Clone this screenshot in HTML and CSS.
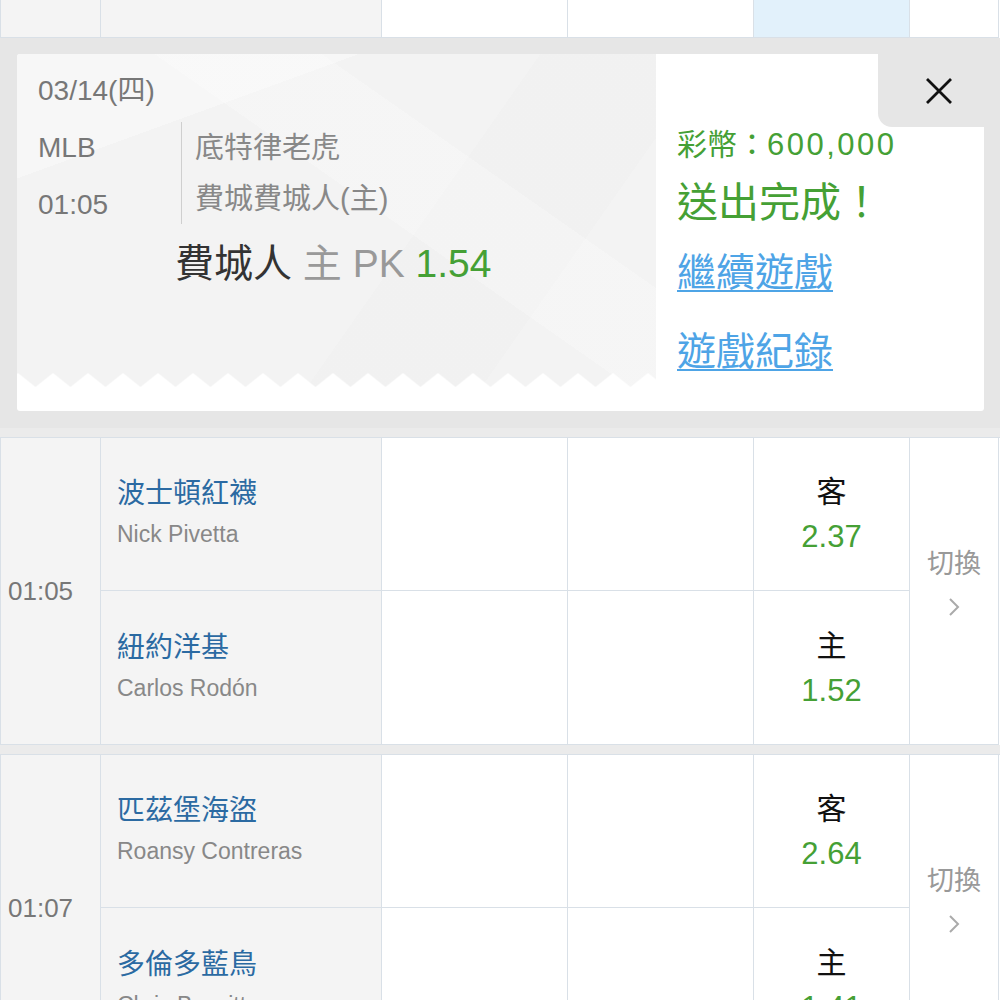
FILE: index.html
```html
<!DOCTYPE html>
<html lang="zh-Hant">
<head>
  <meta charset="UTF-8" />
  <meta name="viewport" content="width=device-width, initial-scale=1.0" />
  <title>投注完成</title>
  <link rel="stylesheet" href="styles.css">
</head>
<body>
  <div class="page">
    <div class="row-tail">
      <div class="cell side-col"></div>
      <div class="cell side-col"></div>
      <div class="cell"></div>
      <div class="cell"></div>
      <div class="cell picked"></div>
      <div class="cell"></div>
    </div>

    <div class="confirm">
      <div class="card">
        <div class="ticket">
          <div class="date">03/14(四)</div>
          <div class="info">
            <div class="meta">
              <div class="league">MLB</div>
              <div class="kick">01:05</div>
            </div>
            <div class="teams">
              <div class="away">底特律老虎</div>
              <div class="home">費城費城人(主)</div>
            </div>
          </div>
          <div class="pick">
            <span class="pick-team">費城人</span>
            <span class="pick-type">主 PK</span>
            <span class="pick-odds">1.54</span>
          </div>
          <svg class="teeth" width="639" height="14">
            <defs>
              <pattern id="tooth" x="-16.5" y="0" width="35" height="14" patternUnits="userSpaceOnUse">
                <polygon points="0,14 17.5,0 35,14" fill="#fff" />
              </pattern>
            </defs>
            <rect width="639" height="14" fill="url(#tooth)" />
          </svg>
        </div>
        <div class="result">
          <div class="coins">彩幣：<span class="amount">600,000</span></div>
          <div class="done">送出完成！</div>
          <a class="link" href="#">繼續遊戲</a>
          <a class="link second" href="#">遊戲紀錄</a>
        </div>
      </div>
      <button class="close" aria-label="關閉">
        <svg width="28" height="28" viewBox="0 0 28 28">
          <path d="M2 2 L26 26 M26 2 L2 26" stroke="#111" stroke-width="2.8" fill="none" />
        </svg>
      </button>
    </div>

    <div class="band"></div>
    <div class="match">
      <div class="cell time">01:05</div>
      <div class="cell team">
        <div class="name">波士頓紅襪</div>
        <div class="pitcher">Nick Pivetta</div>
      </div>
      <div class="cell"></div>
      <div class="cell"></div>
      <div class="cell odds">
        <div class="side">客</div>
        <div class="price">2.37</div>
      </div>
      <div class="cell switch">
        <span>切換</span>
        <svg width="12" height="18" viewBox="0 0 12 18"><polyline points="2,1 10,9 2,17" fill="none" stroke="#aaa" stroke-width="2" /></svg>
      </div>
      <div class="cell team">
        <div class="name">紐約洋基</div>
        <div class="pitcher">Carlos Rodón</div>
      </div>
      <div class="cell"></div>
      <div class="cell"></div>
      <div class="cell odds">
        <div class="side">主</div>
        <div class="price">1.52</div>
      </div>
    </div>

    <div class="band"></div>
    <div class="match">
      <div class="cell time">01:07</div>
      <div class="cell team">
        <div class="name">匹茲堡海盜</div>
        <div class="pitcher">Roansy Contreras</div>
      </div>
      <div class="cell"></div>
      <div class="cell"></div>
      <div class="cell odds">
        <div class="side">客</div>
        <div class="price">2.64</div>
      </div>
      <div class="cell switch">
        <span>切換</span>
        <svg width="12" height="18" viewBox="0 0 12 18"><polyline points="2,1 10,9 2,17" fill="none" stroke="#aaa" stroke-width="2" /></svg>
      </div>
      <div class="cell team">
        <div class="name">多倫多藍鳥</div>
        <div class="pitcher">Chris Bassitt</div>
      </div>
      <div class="cell"></div>
      <div class="cell"></div>
      <div class="cell odds">
        <div class="side">主</div>
        <div class="price">1.41</div>
      </div>
    </div>
  </div>
</body>
</html>
```

FILE: styles.css
```css
* {
  box-sizing: border-box;
}

body {
  margin: 0;
  background: #fff;
  font-family: "Liberation Sans", "Noto Sans CJK TC", sans-serif;
  color: #333;
}

.page {
  width: 1000px;
  height: 1000px;
  overflow: hidden;
}

/* ---------- table ---------- */

.row-tail,
.match {
  display: grid;
  grid-template-columns: 100px 281px 186px 186px 156px 89px;
  border-left: 1px solid #d9e0e7;
}

.row-tail {
  grid-template-rows: 38px;
}

.match {
  grid-template-rows: 153px 154px;
  border-top: 1px solid #d9e0e7;
}

.cell {
  border-right: 1px solid #d9e0e7;
  border-bottom: 1px solid #d9e0e7;
  background: #fff;
}

.side-col,
.time,
.team {
  background: #f4f4f4;
}

.picked {
  background: #e2f1fb;
}

.band {
  height: 9px;
  background: #ebebeb;
}

.time {
  grid-row: span 2;
  display: flex;
  align-items: center;
  padding-left: 7px;
  font-size: 26px;
  color: #777;
}

.team {
  display: flex;
  flex-direction: column;
  justify-content: center;
  padding-left: 16px;
}

.team .name {
  font-size: 28px;
  line-height: 40px;
  color: #2b6aa2;
}

.team .pitcher {
  font-size: 23px;
  line-height: 40px;
  color: #888;
}

.odds {
  display: flex;
  flex-direction: column;
  justify-content: center;
  align-items: center;
}

.odds .side {
  font-size: 30px;
  line-height: 45px;
  color: #111;
}

.odds .price {
  font-size: 31px;
  line-height: 45px;
  color: #45a035;
}

.switch {
  grid-row: span 2;
  display: flex;
  flex-direction: column;
  justify-content: center;
  align-items: center;
  padding-bottom: 22px;
  font-size: 27px;
  line-height: 40px;
  color: #999;
}

.switch svg {
  margin-top: 14px;
}

/* ---------- confirm panel ---------- */

.confirm {
  position: relative;
  height: 390px;
  padding: 16px 16px 17px 17px;
  background: #e6e6e6;
}

.card {
  display: flex;
  height: 357px;
  background: #fff;
  border-radius: 3px;
  overflow: hidden;
}

.ticket {
  display: flex;
  flex-direction: column;
  width: 639px;
  height: 333px;
  padding-left: 21px;
  background:
    linear-gradient(160deg, rgba(255,255,255,0.35) 0 22%, transparent 22%),
    linear-gradient(35deg, transparent 0 55%, rgba(255,255,255,0.22) 55% 70%, transparent 70%),
    linear-gradient(125deg, transparent 0 60%, rgba(0,0,0,0.008) 60% 80%, transparent 80%),
    #f3f3f3;
  color: #777;
}

.date {
  padding-top: 17px;
  font-size: 28px;
  line-height: 40px;
}

.info {
  display: flex;
  align-items: flex-start;
  margin-top: 11px;
}

.meta {
  width: 143px;
  font-size: 28px;
}

.league {
  line-height: 52px;
}

.kick {
  margin-top: 5px;
  line-height: 52px;
}

.teams {
  padding-left: 13px;
  border-left: 1px solid #cfcfcf;
  font-size: 29px;
  color: #888;
}

.away {
  line-height: 52px;
}

.home {
  line-height: 50px;
}

.pick {
  margin-top: 8px;
  padding-left: 137px;
  font-size: 39px;
  line-height: 50px;
}

.pick-team {
  color: #333;
}

.pick-type {
  color: #999;
}

.pick-odds {
  color: #45a035;
}

.teeth {
  display: block;
  margin-top: auto;
  margin-left: -21px;
}

.result {
  flex: 1;
  padding: 66px 0 0 21px;
  color: #45a035;
}

.coins {
  font-size: 30px;
  line-height: 50px;
}

.amount {
  font-size: 31px;
  letter-spacing: 2.5px;
}

.done {
  margin-top: 4px;
  font-size: 41px;
  line-height: 58px;
}

.link {
  display: block;
  margin-top: 11px;
  font-size: 39px;
  line-height: 60px;
  color: #4ea4e6;
  text-decoration: underline;
  text-decoration-thickness: 2px;
  text-underline-offset: 4px;
}

.link.second {
  margin-top: 19px;
}

.close {
  position: absolute;
  top: 16px;
  right: 0;
  width: 122px;
  height: 73px;
  display: flex;
  align-items: center;
  justify-content: center;
  border: 0;
  padding: 0;
  background: #e6e6e6;
  border-bottom-left-radius: 14px;
  cursor: pointer;
}
```
